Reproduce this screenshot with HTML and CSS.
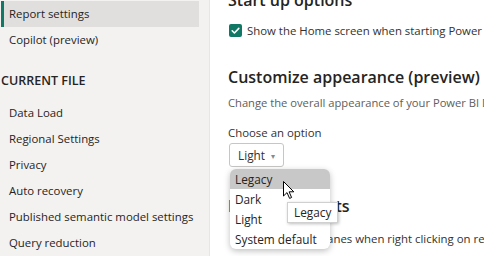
FILE: index.html
```html
<!DOCTYPE html>
<html>
  <head>
    <meta charset="UTF-8" />
    <title>Options</title>
    <link rel="stylesheet" href="styles.css">
  </head>
  <body>
    <div class="page">
      <nav class="sidebar">
        <div class="nav-item active">Report settings</div>
        <div class="nav-item">Copilot (preview)</div>
        <div class="nav-title">CURRENT FILE</div>
        <div class="nav-item">Data Load</div>
        <div class="nav-item">Regional Settings</div>
        <div class="nav-item">Privacy</div>
        <div class="nav-item">Auto recovery</div>
        <div class="nav-item">Published semantic model settings</div>
        <div class="nav-item">Query reduction</div>
      </nav>
      <main class="content">
        <section class="group startup">
          <h2>Start up options</h2>
          <label class="check">
            <span class="box">
              <svg width="13" height="13" viewBox="0 0 13 13"><path d="M3.2 6.8 L5.4 9 L9.8 4.4" fill="none" stroke="#fff" stroke-width="1.6" stroke-linecap="round" stroke-linejoin="round"/></svg>
            </span>
            Show the Home screen when starting Power BI Desktop
          </label>
        </section>
        <section class="group appearance">
          <h2>Customize appearance (preview)</h2>
          <p class="desc">Change the overall appearance of your Power BI Desktop experience.</p>
          <div class="field-label">Choose an option</div>
          <div class="select-wrap">
            <button class="select">Light <span class="caret">&#9662;</span></button>
            <ul class="menu">
              <li class="hover">Legacy</li>
              <li>Dark</li>
              <li>Light</li>
              <li>System default</li>
            </ul>
            <svg class="pointer" width="14" height="20" viewBox="0 0 14 20">
              <path d="M0.5 0.5 L0.5 15 L4 11.6 L6.6 17.4 L8.6 16.5 L6.1 10.8 L10.8 10.8 Z" fill="#fff" stroke="#000" stroke-width="1"/>
            </svg>
            <div class="tooltip">Legacy</div>
          </div>
        </section>
        <section class="group shortcuts">
          <h2>Menu shortcuts</h2>
          <label class="check">
            <span class="box">
              <svg width="13" height="13" viewBox="0 0 13 13"><path d="M3.2 6.8 L5.4 9 L9.8 4.4" fill="none" stroke="#fff" stroke-width="1.6" stroke-linecap="round" stroke-linejoin="round"/></svg>
            </span>
            Show format panes when right clicking on report visuals
          </label>
        </section>
      </main>
    </div>
  </body>
</html>
```

FILE: styles.css
```css
* {
  box-sizing: border-box;
}

body {
  margin: 0;
  width: 484px;
  height: 256px;
  overflow: hidden;
  font-family: "Open Sans", "Noto Sans", sans-serif;
  color: #252423;
  background: #fff;
}

.page {
  display: flex;
  height: 256px;
}

.sidebar {
  width: 210px;
  flex-shrink: 0;
  background: #f3f2f1;
  border-right: 1px solid #e8e6e4;
  padding: 1px 10px 0 1px;
}

.nav-item {
  height: 26px;
  line-height: 26px;
  padding-left: 8px;
  font-size: 11.4px;
  color: #252423;
  white-space: nowrap;
}

.nav-item.active {
  background: #e1dfdd;
  border-left: 3px solid #117865;
  padding-left: 5px;
}

.nav-title {
  margin: 20px 0 11px;
  height: 16px;
  line-height: 16px;
  font-size: 12.5px;
  font-weight: 600;
  color: #252423;
}

.content {
  flex: 1;
  padding-left: 18px;
  margin-top: -12px;
  white-space: nowrap;
  overflow: hidden;
}

.group h2 {
  margin: 0;
  font-size: 16px;
  font-weight: 600;
  line-height: 24px;
  color: #252423;
}

.check {
  display: flex;
  align-items: center;
  gap: 5px;
  margin-top: 11px;
  font-size: 11.4px;
  color: #323130;
}

.box {
  width: 13px;
  height: 13px;
  border-radius: 2px;
  background: #117865;
  display: flex;
  margin-left: 1px;
}

.appearance {
  margin-top: 27px;
}

.desc {
  margin: 6px 0 0;
  font-size: 11.2px;
  color: #605e5c;
}

.field-label {
  margin-top: 15px;
  font-size: 11.4px;
  color: #323130;
}

.select-wrap {
  position: relative;
  margin-top: 3px;
}

.select {
  height: 24px;
  padding: 0 8px;
  margin-left: 1px;
  border: 1px solid #c8c6c4;
  border-radius: 3px;
  background: #fff;
  font-family: inherit;
  font-size: 11.8px;
  color: #323130;
}

.caret {
  font-size: 8px;
  color: #8a8886;
  margin-left: 3px;
  vertical-align: 1px;
}

.menu {
  position: absolute;
  left: 2px;
  top: 26px;
  width: 100px;
  margin: 0;
  padding: 0;
  list-style: none;
  background: #fff;
  border-radius: 6px;
  overflow: hidden;
  box-shadow: 0 2px 6px rgba(0, 0, 0, 0.25);
  z-index: 2;
}

.menu li {
  height: 20px;
  line-height: 20px;
  padding-left: 5px;
  font-size: 11.8px;
  color: #252423;
}

.menu li.hover {
  background: #c8c8c8;
}

.pointer {
  position: absolute;
  left: 55px;
  top: 38px;
  z-index: 3;
}

.tooltip {
  position: absolute;
  left: 59px;
  top: 59px;
  padding: 1px 6px 2px;
  font-size: 11.8px;
  color: #252423;
  background: #fff;
  border: 1px solid #d0d0d0;
  box-shadow: 1px 1px 3px rgba(0, 0, 0, 0.25);
  z-index: 3;
}

.shortcuts {
  margin-top: 27px;
}

.shortcuts .check {
  margin-top: 13px;
}

.shortcuts .box {
  margin-left: 3px;
}
```
